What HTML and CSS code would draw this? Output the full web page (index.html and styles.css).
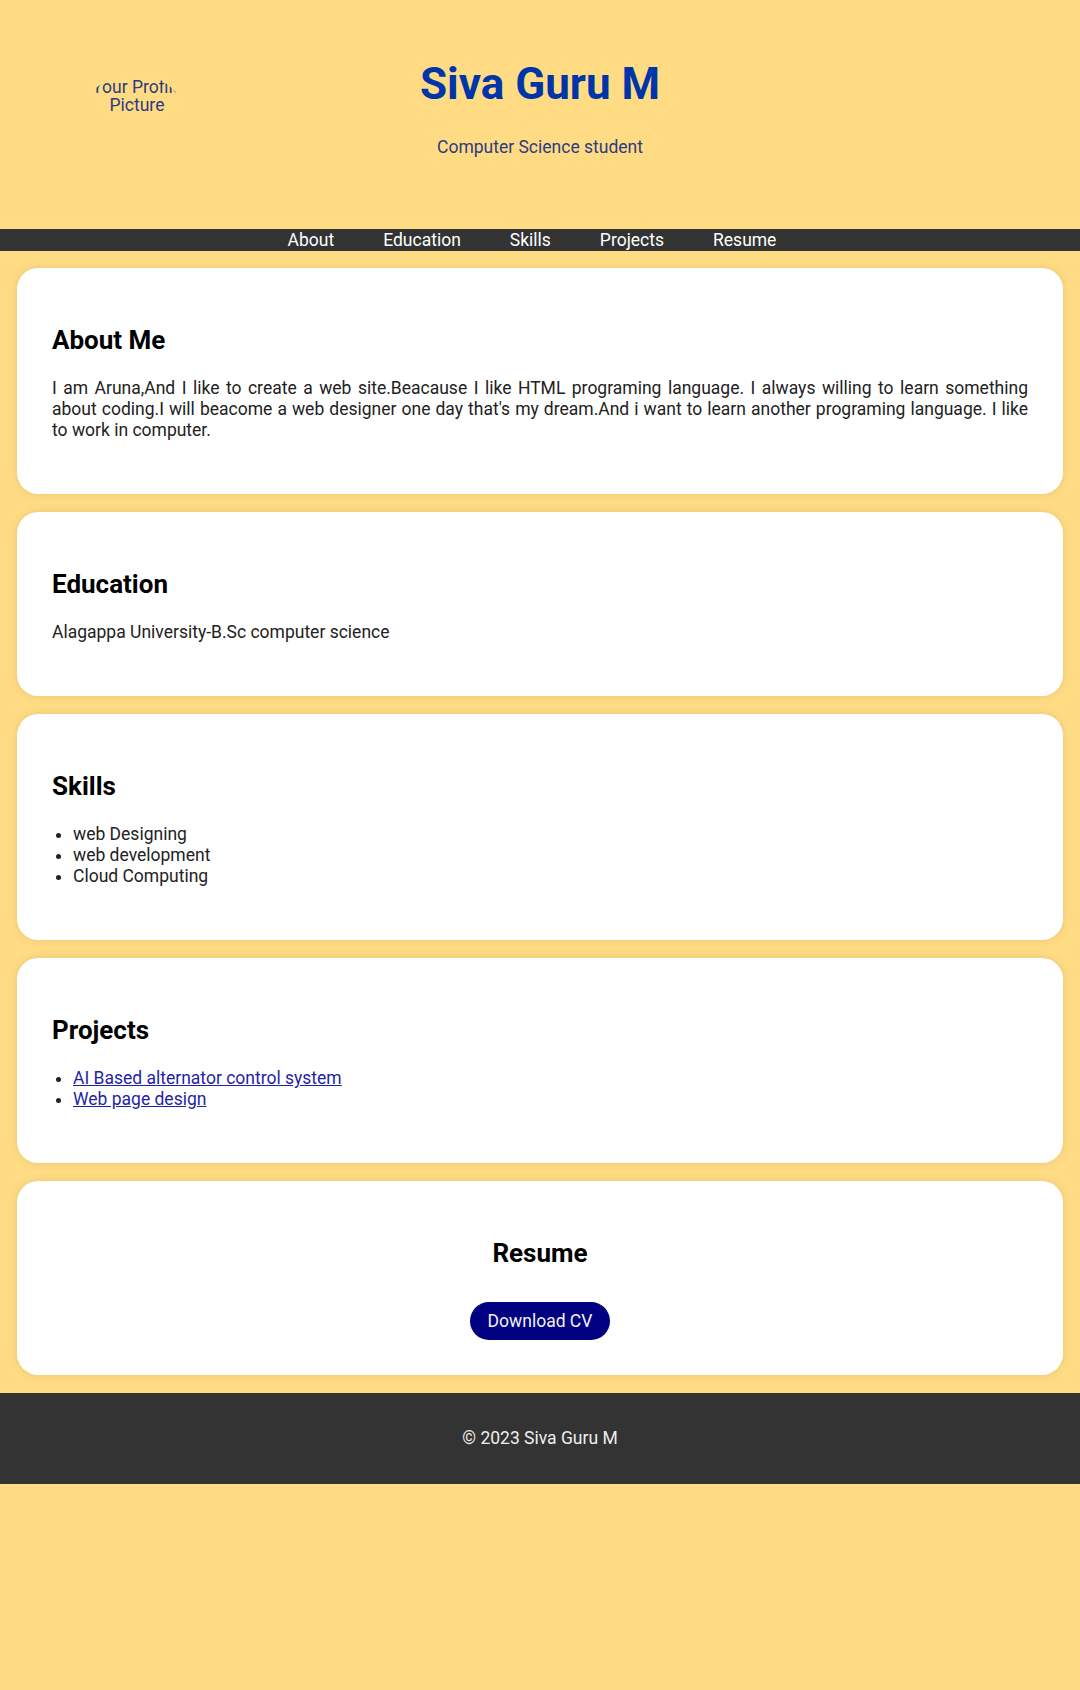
FILE: index.html
```html
<!DOCTYPE html>
<html lang="en">
<head>
<meta charset="utf-8">
<title>Siva Guru M</title>
<link rel="stylesheet" href="styles.css">
</head>
<body>
<header class="site-header">
  <div class="avatar">Your Profile Picture</div>
  <div class="intro">
    <h1 class="name">Siva Guru M</h1>
    <p class="tagline">Computer Science student</p>
  </div>
</header>
<nav class="main-nav">
  <a href="#about">About</a>
  <a href="#education">Education</a>
  <a href="#skills">Skills</a>
  <a href="#projects">Projects</a>
  <a href="#resume">Resume</a>
</nav>
<main>
  <section class="card" id="about">
    <h2>About Me</h2>
    <p class="justify">I am Aruna,And I like to create a web site.Beacause I like HTML programing language. I always willing to learn something about coding.I will beacome a web designer one day that's my dream.And i want to learn another programing language. I like to work in computer.</p>
  </section>
  <section class="card" id="education">
    <h2>Education</h2>
    <p>Alagappa University-B.Sc computer science</p>
  </section>
  <section class="card" id="skills">
    <h2>Skills</h2>
    <ul>
      <li>web Designing</li>
      <li>web development</li>
      <li>Cloud Computing</li>
    </ul>
  </section>
  <section class="card" id="projects">
    <h2>Projects</h2>
    <ul>
      <li><a class="link" href="#projects">AI Based alternator control system</a></li>
      <li><a class="link" href="#projects">Web page design</a></li>
    </ul>
  </section>
  <section class="card card-center" id="resume">
    <h2>Resume</h2>
    <a class="btn" href="#resume">Download CV</a>
  </section>
</main>
<footer class="site-footer">
  <p>&copy; 2023 Siva Guru M</p>
</footer>
</body>
</html>
```
FILE: styles.css
```css
html, body {
  margin: 0;
  padding: 0;
}
body {
  background: #ffdc84;
  font-family: Roboto, "Liberation Sans", Arial, sans-serif;
  font-size: 17.5px;
  line-height: 21px;
  color: #222;
}
.site-header {
  display: grid;
  grid-template-columns: 1fr auto 1fr;
  padding: 59px 0 46px;
}
.avatar {
  grid-column: 1;
  justify-self: start;
  align-self: start;
  width: 110px;
  height: 110px;
  margin: 14px 0 0 79px;
  padding: 5px 0 0 6px;
  box-sizing: border-box;
  border-radius: 50%;
  overflow: hidden;
  text-align: center;
  font-size: 17.5px;
  line-height: 18px;
  color: #2d3b80;
}
.intro {
  grid-column: 2;
  text-align: center;
}
.name {
  margin: 0 0 27px;
  font-size: 44px;
  line-height: 51px;
  font-weight: 700;
  color: #0035aa;
}
.tagline {
  margin: 0;
  color: #2d3b80;
}
.main-nav {
  display: flex;
  justify-content: center;
  gap: 49px;
  padding-right: 16px;
  background: #333;
}
.main-nav a {
  color: #fff;
  text-decoration: none;
  line-height: 22px;
}
main {
  padding-top: 0.1px;
}
.card {
  background: #fff;
  margin: 17px 17px 18px;
  padding: 35px;
  border-radius: 21px;
  box-shadow: 0 0 10px rgba(0, 0, 0, 0.1);
}
.card h2 {
  margin: 22px 0 23px;
  font-size: 26px;
  line-height: 30px;
  font-weight: 700;
  color: #000;
}
.card p, .card ul {
  margin: 0 0 18px;
}
.card ul {
  padding-left: 21px;
}
.justify {
  text-align: justify;
}
.link {
  color: #1f1fa8;
}
.card-center {
  text-align: center;
}
.btn {
  display: inline-block;
  margin-top: 11px;
  padding: 8px 18px;
  border-radius: 20px;
  background: #000080;
  color: #f2f2f2;
  text-decoration: none;
  line-height: 22px;
}
.site-footer {
  background: #333;
  color: #eee;
  text-align: center;
  padding: 17px;
}
.site-footer p {
  margin: 18px 0;
}
```
